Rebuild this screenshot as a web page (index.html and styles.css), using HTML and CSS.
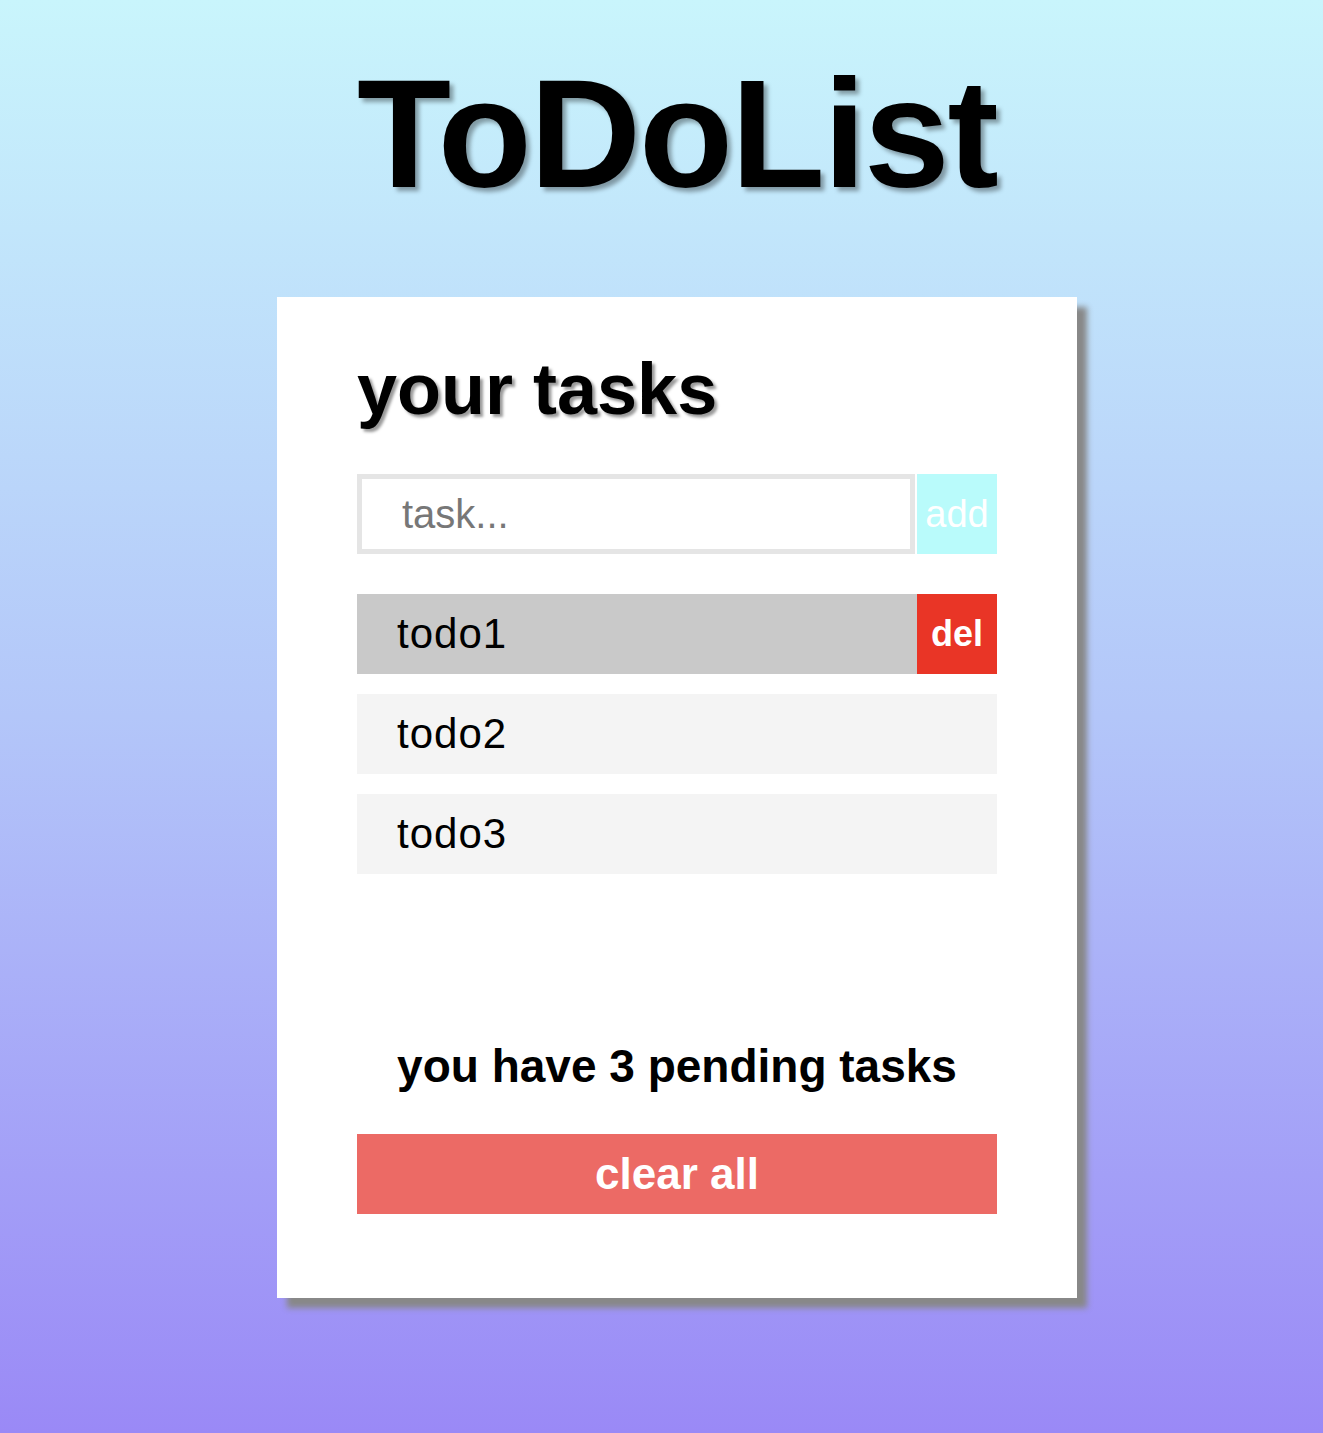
FILE: index.html
```html
<!DOCTYPE html>
<html>
<head>
<meta charset="utf-8">
<title>ToDoList</title>
<link rel="stylesheet" href="styles.css">
</head>
<body>
<div class="page">
  <h1 class="title">ToDoList</h1>
  <div class="card">
    <h2 class="heading">your tasks</h2>
    <div class="input-row">
      <input class="task-input" type="text" placeholder="task...">
      <button class="add-btn">add</button>
    </div>
    <ul class="list">
      <li class="item item-active"><span class="item-text">todo1</span><button class="del-btn">del</button></li>
      <li class="item"><span class="item-text">todo2</span></li>
      <li class="item"><span class="item-text">todo3</span></li>
    </ul>
    <p class="pending">you have 3 pending tasks</p>
    <button class="clear-btn">clear all</button>
  </div>
</div>
</body>
</html>
```
FILE: styles.css
```css
html, body {
  margin: 0;
  padding: 0;
}
body {
  min-height: 1433px;
  background: linear-gradient(to bottom, #c9f5fc 0%, #b3c6f9 50%, #9a89f6 100%);
  font-family: "Liberation Sans", Arial, sans-serif;
}
.page {
  display: flex;
  flex-direction: column;
  align-items: center;
  padding-top: 54px;
  padding-left: 31px;
}
.title {
  margin: 0;
  font-size: 154px;
  line-height: 160px;
  font-weight: bold;
  letter-spacing: -2px;
  color: #000;
  text-shadow: 4px 4px 4px rgba(0,0,0,0.35);
}
.card {
  margin-top: 83px;
  width: 640px;
  height: 841px;
  padding: 80px;
  background: #fff;
  box-shadow: 10px 10px 6px #888;
  display: flex;
  flex-direction: column;
  box-sizing: content-box;
}
.heading {
  margin: -24px 0 0;
  font-size: 72px;
  line-height: 72px;
  font-weight: bold;
  color: #000;
  text-shadow: 3px 3px 3px rgba(0,0,0,0.4);
  height: 121px;
}
.input-row {
  display: flex;
  height: 80px;
}
.task-input {
  flex: 1;
  min-width: 0;
  box-sizing: border-box;
  height: 80px;
  border: 5px solid #e5e5e5;
  margin: 0;
  padding: 0 0 0 40px;
  font-family: "Liberation Sans", Arial, sans-serif;
  font-size: 40px;
  color: #000;
  outline: none;
}
.task-input::placeholder {
  color: #777;
}
.add-btn {
  width: 80px;
  height: 80px;
  margin: 0 0 0 2px;
  border: none;
  padding: 0;
  background: #b9fbfb;
  color: #fff;
  font-family: "Liberation Sans", Arial, sans-serif;
  font-size: 38px;
}
.list {
  list-style: none;
  margin: 40px 0 0;
  padding: 0;
  display: flex;
  flex-direction: column;
  gap: 20px;
}
.item {
  display: flex;
  align-items: center;
  height: 80px;
  background: #f4f4f4;
  padding-left: 40px;
}
.item-active {
  background: #c9c9c9;
}
.item-text {
  flex: 1;
  font-size: 42px;
  letter-spacing: 1px;
  color: #000;
}
.del-btn {
  width: 80px;
  height: 80px;
  border: none;
  margin: 0;
  padding: 0;
  background: #e93526;
  color: #fff;
  font-family: "Liberation Sans", Arial, sans-serif;
  font-weight: bold;
  font-size: 36px;
}
.pending {
  margin: 167px 0 0;
  text-align: center;
  font-size: 46px;
  line-height: 50px;
  font-weight: bold;
  color: #000;
}
.clear-btn {
  margin-top: 43px;
  height: 80px;
  border: none;
  padding: 0;
  background: #ec6a65;
  color: #fff;
  font-family: "Liberation Sans", Arial, sans-serif;
  font-weight: bold;
  font-size: 44px;
}
```
